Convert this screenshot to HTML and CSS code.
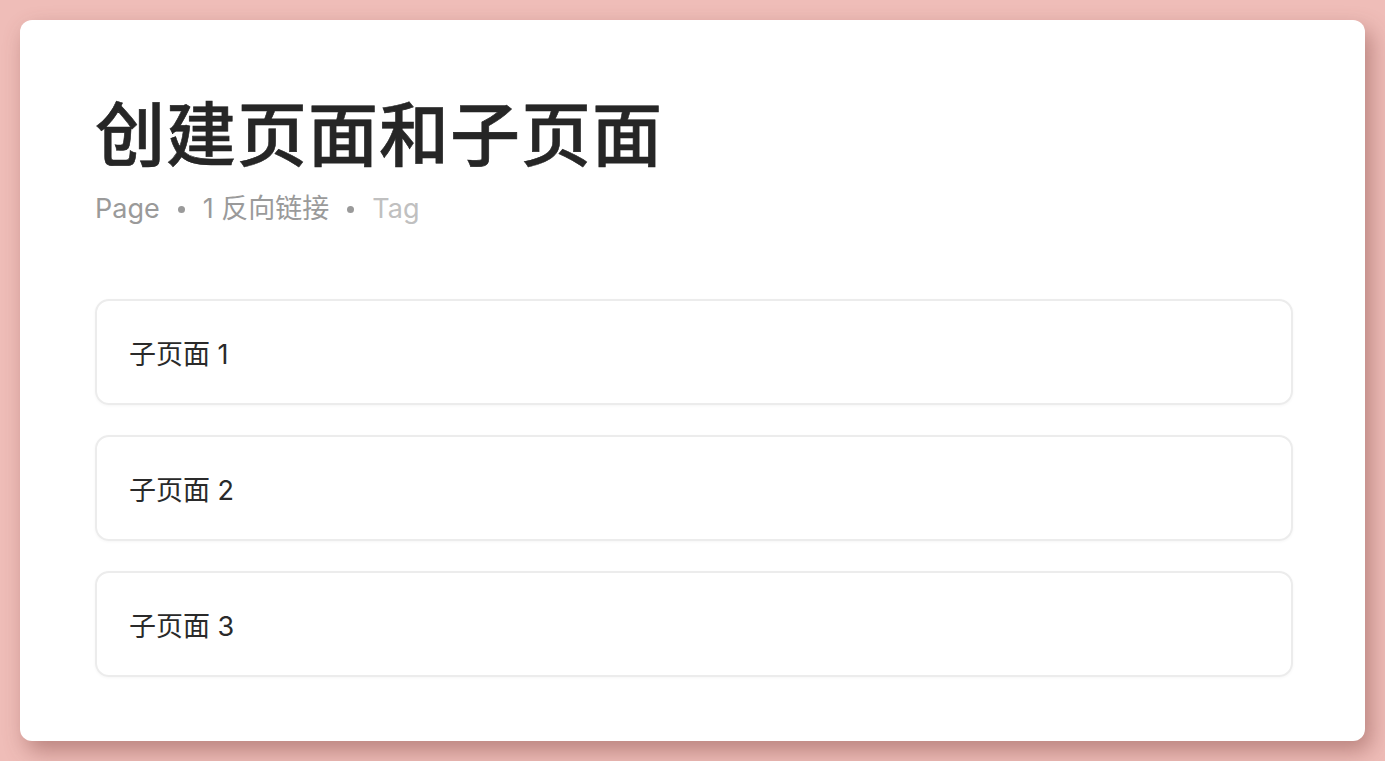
FILE: index.html
```html
<!DOCTYPE html>
<html lang="zh">
<head>
<meta charset="utf-8">
<link rel="stylesheet" href="styles.css">
</head>
<body>
<div class="card">
  <h1 class="title">创建页面和子页面</h1>
  <div class="meta">
    <span class="meta-item">Page</span>
    <span class="dot"></span>
    <span class="meta-item">1 反向链接</span>
    <span class="dot"></span>
    <span class="meta-item tag">Tag</span>
  </div>
  <div class="list">
    <div class="item">子页面 1</div>
    <div class="item">子页面 2</div>
    <div class="item">子页面 3</div>
  </div>
</div>
</body>
</html>
```
FILE: styles.css
```css
html, body {
  margin: 0;
  padding: 0;
}
body {
  background: #efbdb8;
  width: 1385px;
  height: 761px;
  padding: 20px;
  box-sizing: border-box;
  font-family: Inter, "Noto Sans CJK SC", sans-serif;
  overflow: hidden;
}
.card {
  background: #ffffff;
  border-radius: 12px;
  height: 721px;
  box-sizing: border-box;
  padding: 69px 72px 0 75px;
  box-shadow: 6px 10px 22px rgba(120, 60, 55, 0.45);
}
.title {
  margin: 0;
  font-family: "Noto Sans CJK SC", sans-serif;
  font-size: 70px;
  line-height: 84px;
  font-weight: 500;
  color: #262626;
  -webkit-text-stroke: 0.6px #262626;
  letter-spacing: 1px;
}
.meta {
  display: flex;
  align-items: center;
  gap: 18px;
  margin-top: 16px;
  font-size: 27px;
  line-height: 40px;
  color: #9a9a9a;
}
.dot {
  width: 7px;
  height: 7px;
  border-radius: 50%;
  background: #9a9a9a;
}
.tag {
  color: #c0c0c0;
}
.list {
  margin-top: 70px;
  display: flex;
  flex-direction: column;
  gap: 30px;
}
.item {
  height: 106px;
  box-sizing: border-box;
  border: 2px solid #ececec;
  border-radius: 14px;
  padding: 0 32px;
  display: flex;
  align-items: center;
  font-size: 27px;
  color: #2a2a2a;
  box-shadow: 0 1px 3px rgba(0,0,0,0.04);
}
```
